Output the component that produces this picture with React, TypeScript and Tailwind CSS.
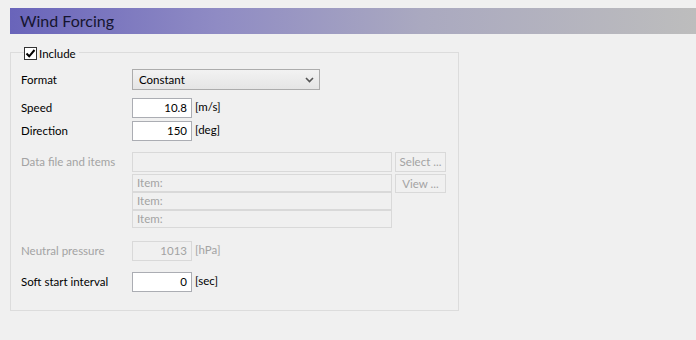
import React from "react";

function Label({ children, disabled }: { children: React.ReactNode; disabled?: boolean }) {
  return (
    <div className={`w-[111px] shrink-0 ${disabled ? "text-[#a3a3a3]" : "text-black"}`}>{children}</div>
  );
}

function NumBox({ value, disabled }: { value: string; disabled?: boolean }) {
  return (
    <div
      className={`h-[20px] w-[60px] flex items-center justify-end pr-[4px] border ${
        disabled ? "border-[#d9d9d9] bg-[#f0f0f0] text-[#a3a3a3]" : "border-[#abadb3] bg-white text-black"
      }`}
    >
      {value}
    </div>
  );
}

function Unit({ children, disabled }: { children: React.ReactNode; disabled?: boolean }) {
  return <div className={`ml-[3px] -mt-[3px] ${disabled ? "text-[#a3a3a3]" : "text-black"}`}>{children}</div>;
}

export default function App() {
  return (
    <div className="w-[696px] h-[340px] bg-[#f0f0f0] pt-[8px] pl-[10px] font-['Lato',sans-serif] text-[11.5px] leading-none overflow-hidden">
      <div className="h-[26px] flex items-center pl-[10px] bg-[linear-gradient(to_right,#6964ba_0%,#8f8bc4_30%,#aaa9c0_60%,#bdbdbd_100%)]">
        <span className="text-[16px] text-[#151530]">Wind Forcing</span>
      </div>

      <div className="relative mt-[18px] w-[449px] h-[259px] border border-[#dcdcdc] pt-[16px] pl-[10px]">
        <div className="absolute -top-[6px] left-[13px] flex items-center bg-[#f0f0f0] pr-[3px]">
          <div className="w-[13px] h-[13px] border border-[#333] bg-white flex items-center justify-center">
            <svg width="11" height="11" viewBox="0 0 11 11">
              <path d="M1.5 5.5 L4.2 8.3 L9.5 2" stroke="#000" strokeWidth="2" fill="none" />
            </svg>
          </div>
          <span className="ml-[2px]">Include</span>
        </div>

        <div className="flex items-center h-[21px]">
          <Label>Format</Label>
          <div className="h-[21px] w-[188px] border border-[#acacac] bg-[linear-gradient(#f2f2f2,#e5e5e5)] flex items-center justify-between pl-[6px] pr-[5px]">
            <span>Constant</span>
            <svg width="9" height="6" viewBox="0 0 9 6">
              <path d="M1 1 L4.5 4.5 L8 1" stroke="#555" strokeWidth="1.6" fill="none" />
            </svg>
          </div>
        </div>

        <div className="flex items-center h-[20px] mt-[8px]">
          <Label>Speed</Label>
          <NumBox value="10.8" />
          <Unit>[m/s]</Unit>
        </div>

        <div className="flex items-center h-[20px] mt-[3px]">
          <Label>Direction</Label>
          <NumBox value="150" />
          <Unit>[deg]</Unit>
        </div>

        <div className="flex mt-[11px]">
          <Label disabled>
            <div className="h-[20px] flex items-center">Data file and items</div>
          </Label>
          <div className="flex flex-col">
            <div className="h-[20px] w-[260px] border border-[#d9d9d9]" />
            <div className="mt-[2px] flex flex-col">
              {["Item:", "Item:", "Item:"].map((t, i) => (
                <div
                  key={i}
                  className="h-[18px] w-[260px] border border-[#d9d9d9] flex items-center pl-[4px] text-[#a3a3a3]"
                >
                  {t}
                </div>
              ))}
            </div>
          </div>
          <div className="flex flex-col ml-[3px]">
            <div className="h-[20px] w-[51px] border border-[#d9d9d9] flex items-center justify-center text-[#a3a3a3]">
              Select ...
            </div>
            <div className="mt-[2px] h-[19px] w-[51px] border border-[#d9d9d9] flex items-center justify-center text-[#a3a3a3]">
              View ...
            </div>
          </div>
        </div>

        <div className="flex items-center h-[20px] mt-[13px]">
          <Label disabled>Neutral pressure</Label>
          <NumBox value="1013" disabled />
          <Unit disabled>[hPa]</Unit>
        </div>

        <div className="flex items-center h-[20px] mt-[11px]">
          <Label>Soft start interval</Label>
          <NumBox value="0" />
          <Unit>[sec]</Unit>
        </div>
      </div>
    </div>
  );
}
